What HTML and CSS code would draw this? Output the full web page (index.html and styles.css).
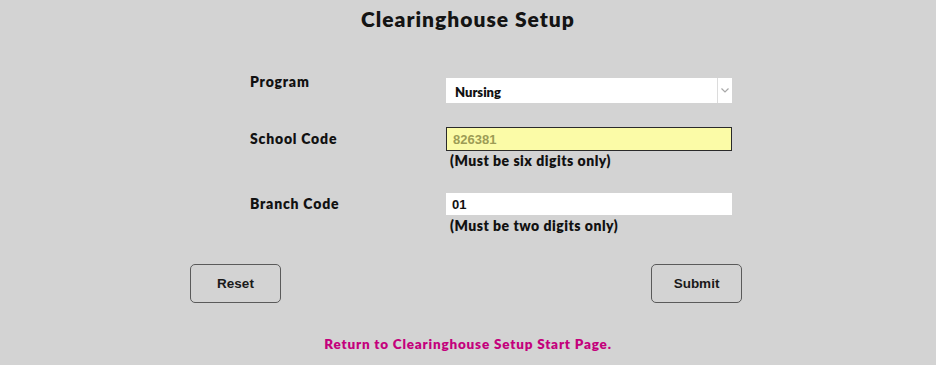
FILE: index.html
```html
<!DOCTYPE html>
<html lang="en">
<head>
<meta charset="utf-8">
<title>Clearinghouse Setup</title>
<link rel="stylesheet" href="styles.css">
</head>
<body>
<h1 class="title">Clearinghouse Setup</h1>
<form class="form">
  <div class="row row-top">
    <label class="label" for="program">Program</label>
    <div class="select-wrap">
      <select id="program" class="select">
        <option>Nursing</option>
      </select>
      <span class="select-arrow">
        <svg width="8" height="5" viewBox="0 0 8 5"><path d="M0.5 0.5 L4 4 L7.5 0.5" fill="none" stroke="#a8a8a8" stroke-width="1.2"/></svg>
      </span>
    </div>
  </div>
  <div class="row row-school">
    <label class="label" for="school">School Code</label>
    <input id="school" class="input input-school" type="text" value="826381">
  </div>
  <div class="hint hint-school">(Must be six digits only)</div>
  <div class="row row-branch">
    <label class="label" for="branch">Branch Code</label>
    <input id="branch" class="input input-branch" type="text" value="01">
  </div>
  <div class="hint hint-branch">(Must be two digits only)</div>
  <div class="buttons">
    <button type="reset" class="btn btn-reset">Reset</button>
    <button type="submit" class="btn btn-submit">Submit</button>
  </div>
</form>
<p class="link-wrap"><a class="link" href="#">Return to Clearinghouse Setup Start Page.</a></p>
</body>
</html>
```
FILE: styles.css
```css
html, body {
  margin: 0;
  padding: 0;
  background: #d3d3d3;
}
body {
  width: 936px;
  height: 365px;
  font-family: "Lato", "DejaVu Sans", sans-serif;
  color: #111;
  overflow: hidden;
}
.title {
  margin: 0;
  padding-top: 8px;
  font-size: 21px;
  line-height: 22px;
  font-weight: 800;
  text-align: center;
  letter-spacing: 1px;
  color: #141414;
}
.form {
  display: flex;
  flex-direction: column;
  margin: 0;
}
.row {
  display: flex;
  padding-left: 250px;
}
.label {
  width: 196px;
  font-size: 14px;
  line-height: 16px;
  font-weight: 800;
  letter-spacing: 0.8px;
}
.row-top {
  margin-top: 44px;
  align-items: flex-start;
}
.select-wrap {
  margin-top: 4px;
  width: 286px;
  height: 25px;
  display: flex;
  background: #fff;
}
.select {
  flex: 1;
  appearance: none;
  -webkit-appearance: none;
  border: none;
  outline: none;
  background: #fff;
  margin: 0;
  padding: 2px 8px 0 9px;
  font-family: "Lato", "DejaVu Sans", sans-serif;
  font-size: 13px;
  font-weight: 800;
  color: #111;
}
.select-arrow {
  width: 14px;
  border-left: 1px solid #dcdcdc;
  display: flex;
  align-items: center;
  justify-content: center;
}
.row-school {
  margin-top: 24px;
  align-items: center;
}
.input {
  box-sizing: border-box;
  width: 286px;
  margin: 0;
  outline: none;
  font-family: "Liberation Sans", Arial, sans-serif;
  font-size: 13px;
  padding: 0 6px;
}
.input-school {
  height: 24px;
  border: 1px solid #2a2a2a;
  background: #fbfba7;
  color: #9d9c55;
  font-weight: 700;
}
.row-branch {
  margin-top: 24px;
  align-items: center;
}
.input-branch {
  height: 22px;
  border: none;
  background: #fff;
  color: #111;
  font-weight: 700;
}
.hint {
  padding-left: 450px;
  font-size: 14px;
  line-height: 16px;
  font-weight: 800;
  letter-spacing: 0.5px;
}
.hint-school {
  margin-top: 2px;
}
.hint-branch {
  margin-top: 3px;
}
.buttons {
  display: flex;
  justify-content: space-between;
  margin: 30px 0 0 190px;
  width: 552px;
}
.btn {
  width: 91px;
  height: 39px;
  box-sizing: border-box;
  background: #d3d3d3;
  border: 1px solid #5a5a5a;
  border-radius: 5px;
  font-family: "Liberation Sans", Arial, sans-serif;
  font-size: 13.5px;
  font-weight: 700;
  color: #1a1a1a;
  padding: 0;
}
.link-wrap {
  margin: 32px 0 0;
  text-align: center;
  line-height: 16px;
}
.link {
  color: #c4007c;
  text-decoration: none;
  font-size: 13.5px;
  font-weight: 800;
  letter-spacing: 0.8px;
}
```
